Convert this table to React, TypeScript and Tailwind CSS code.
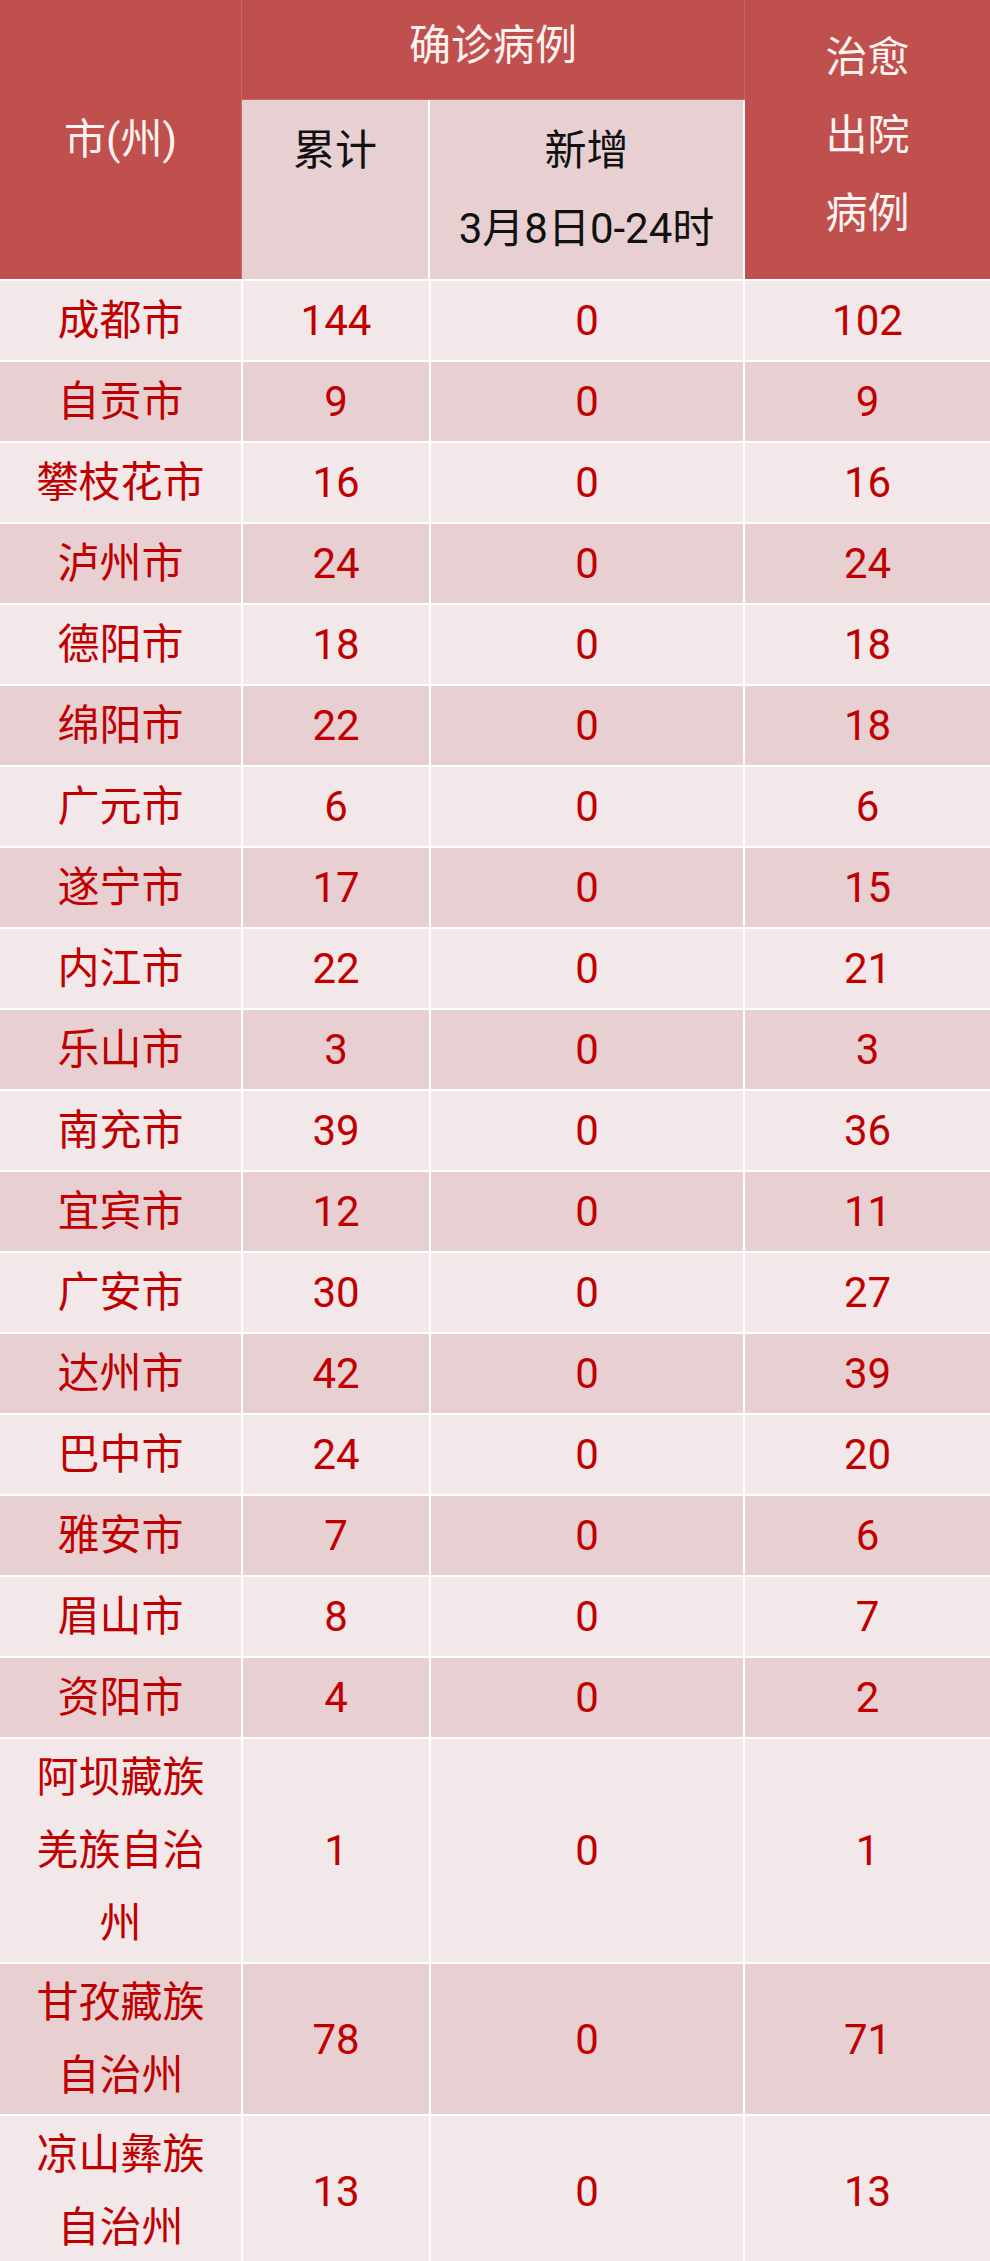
import React from 'react';

interface CityRow {
  name: string;
  total: number;
  added: number;
  cured: number;
}

const rows: CityRow[] = [
  { name: '成都市', total: 144, added: 0, cured: 102 },
  { name: '自贡市', total: 9, added: 0, cured: 9 },
  { name: '攀枝花市', total: 16, added: 0, cured: 16 },
  { name: '泸州市', total: 24, added: 0, cured: 24 },
  { name: '德阳市', total: 18, added: 0, cured: 18 },
  { name: '绵阳市', total: 22, added: 0, cured: 18 },
  { name: '广元市', total: 6, added: 0, cured: 6 },
  { name: '遂宁市', total: 17, added: 0, cured: 15 },
  { name: '内江市', total: 22, added: 0, cured: 21 },
  { name: '乐山市', total: 3, added: 0, cured: 3 },
  { name: '南充市', total: 39, added: 0, cured: 36 },
  { name: '宜宾市', total: 12, added: 0, cured: 11 },
  { name: '广安市', total: 30, added: 0, cured: 27 },
  { name: '达州市', total: 42, added: 0, cured: 39 },
  { name: '巴中市', total: 24, added: 0, cured: 20 },
  { name: '雅安市', total: 7, added: 0, cured: 6 },
  { name: '眉山市', total: 8, added: 0, cured: 7 },
  { name: '资阳市', total: 4, added: 0, cured: 2 },
  { name: '阿坝藏族羌族自治州', total: 1, added: 0, cured: 1 },
  { name: '甘孜藏族自治州', total: 78, added: 0, cured: 71 },
  { name: '凉山彝族自治州', total: 13, added: 0, cured: 13 },
];

const font = { fontFamily: 'Roboto, "Noto Sans CJK SC", sans-serif' };

const Cell = ({ children, dark, wide }: { children: React.ReactNode; dark: boolean; wide?: boolean }) => (
  <div
    className={`flex min-h-[79px] items-center justify-center py-[2px] text-center leading-[73px] text-[#c00000] ${
      wide ? 'px-5' : 'px-2'
    } ${dark ? 'bg-[#e8d0d2]' : 'bg-[#f3e8e9]'}`}
  >
    {children}
  </div>
);

export default function App() {
  return (
    <div className="w-[990px] bg-white text-[42px]" style={font}>
      {/* Header */}
      <div className="grid grid-cols-[242px_188px_315px_245px] grid-rows-[100px_179px]">
        <div className="row-span-2 flex items-center justify-center border-r border-[#c9686a] bg-[#c0504d] text-[#fff3f1]">
          市(州)
        </div>
        <div className="col-span-2 flex items-center justify-center border-r border-b border-[#c9686a] bg-[#c0504d] pb-[9px] text-[#fff3f1]">
          确诊病例
        </div>
        <div className="row-span-2 flex flex-col items-center justify-center bg-[#c0504d] pb-[8px] leading-[78px] text-[#fff3f1]">
          <span>治愈</span>
          <span>出院</span>
          <span>病例</span>
        </div>
        <div className="border-r-2 border-white bg-[#e8d0d2] pt-[12px] text-center leading-[78px] text-[#111]">累计</div>
        <div className="flex flex-col items-center border-r-2 border-white bg-[#e8d0d2] pt-[12px] leading-[78px] text-[#111]">
          <span>新增</span>
          <span>3月8日0-24时</span>
        </div>
      </div>

      {/* Body */}
      <div className="grid grid-cols-[241px_186px_312px_245px] gap-[2px] bg-white pt-[2px]">
        {rows.map((r, i) => {
          const dark = i % 2 === 1;
          return (
            <React.Fragment key={r.name}>
              <Cell dark={dark} wide>
                {r.name}
              </Cell>
              <Cell dark={dark}>{r.total}</Cell>
              <Cell dark={dark}>{r.added}</Cell>
              <Cell dark={dark}>{r.cured}</Cell>
            </React.Fragment>
          );
        })}
      </div>
    </div>
  );
}
